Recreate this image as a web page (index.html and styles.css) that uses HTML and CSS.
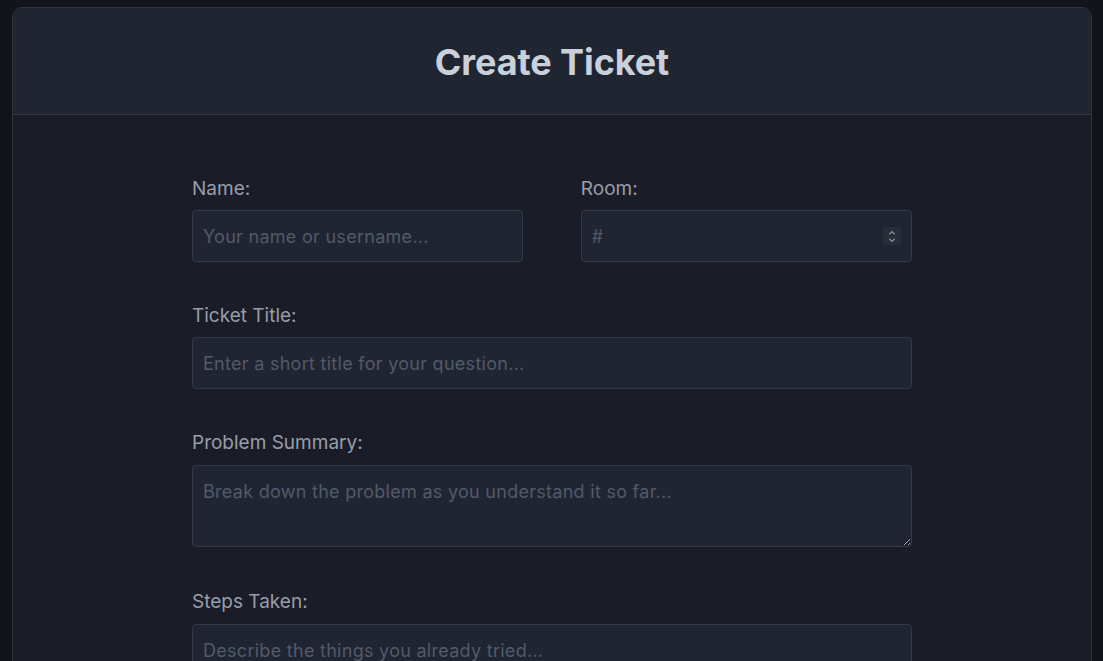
FILE: index.html
```html
<!DOCTYPE html>
<html lang="en">
<head>
<meta charset="utf-8">
<title>Create Ticket</title>
<link rel="stylesheet" href="styles.css">
</head>
<body>
<div class="card">
  <header class="card-header">
    <h1 class="title">Create Ticket</h1>
  </header>
  <main class="card-body">
    <form class="form">
      <div class="row">
        <div class="field half">
          <label class="label" for="name">Name:</label>
          <input class="input" id="name" type="text" placeholder="Your name or username...">
        </div>
        <div class="field half">
          <label class="label" for="room">Room:</label>
          <div class="number-wrap">
            <input class="input number" id="room" type="number" placeholder="#">
            <span class="spin" aria-hidden="true">
              <svg width="8" height="13" viewBox="0 0 8 13"><path d="M1.2 4.4 L4 1.6 L6.8 4.4 M1.2 8.6 L4 11.4 L6.8 8.6" fill="none" stroke="#8d93a0" stroke-width="1.3"/></svg>
            </span>
          </div>
        </div>
      </div>
      <div class="field">
        <label class="label" for="title">Ticket Title:</label>
        <input class="input" id="title" type="text" placeholder="Enter a short title for your question...">
      </div>
      <div class="field">
        <label class="label" for="summary">Problem Summary:</label>
        <textarea class="input textarea" id="summary" placeholder="Break down the problem as you understand it so far..."></textarea>
      </div>
      <div class="field">
        <label class="label" for="steps">Steps Taken:</label>
        <textarea class="input textarea" id="steps" placeholder="Describe the things you already tried..."></textarea>
      </div>
    </form>
  </main>
</div>
</body>
</html>
```
FILE: styles.css
```css
* { box-sizing: border-box; }
html, body { height: 100%; }
body {
  margin: 0;
  padding: 7px 11px 0 12px;
  background: #12141c;
  font-family: Inter, "Noto Sans", sans-serif;
  color-scheme: dark;
  overflow: hidden;
}
.card {
  background: #1a1d27;
  border: 1px solid #2f3441;
  border-radius: 10px;
  overflow: hidden;
  min-height: 700px;
}
.card-header {
  background: #202532;
  border-bottom: 1px solid #313644;
  height: 107px;
  display: flex;
  align-items: center;
  justify-content: center;
  padding-top: 2px;
}
.title {
  margin: 0;
  font-size: 36px;
  font-weight: 700;
  color: #c9d0da;
  letter-spacing: -0.1px;
}
.card-body {
  padding: 60px 0 40px;
}
.form {
  width: 720px;
  margin: 0 auto;
  display: flex;
  flex-direction: column;
  gap: 40px;
}
.row {
  display: flex;
  justify-content: space-between;
}
.field {
  display: flex;
  flex-direction: column;
}
.half { width: 46%; }
.label {
  font-size: 19px;
  line-height: 27px;
  color: #979ea9;
  margin-bottom: 8px;
}
.input {
  height: 52px;
  background: #202533;
  border: 1px solid #343946;
  border-radius: 4px;
  padding: 0 10px;
  font-family: Inter, "Noto Sans", sans-serif;
  font-size: 18px;
  letter-spacing: 0.28px;
  color: #c9d0da;
  outline: none;
}
.input::placeholder { color: #535a68; }
.number-wrap {
  position: relative;
  display: flex;
  flex-direction: column;
}
.number { -moz-appearance: textfield; }
.number::-webkit-inner-spin-button,
.number::-webkit-outer-spin-button { -webkit-appearance: none; margin: 0; }
.spin {
  position: absolute;
  right: 11px;
  top: 17px;
  width: 18px;
  height: 18px;
  background: #292d37;
  border-radius: 2px;
  display: flex;
  align-items: center;
  justify-content: center;
}
.textarea {
  height: 82px;
  margin: 1px 0 1px;
  padding: 12px 10px;
  line-height: 27px;
  resize: vertical;
}
```
